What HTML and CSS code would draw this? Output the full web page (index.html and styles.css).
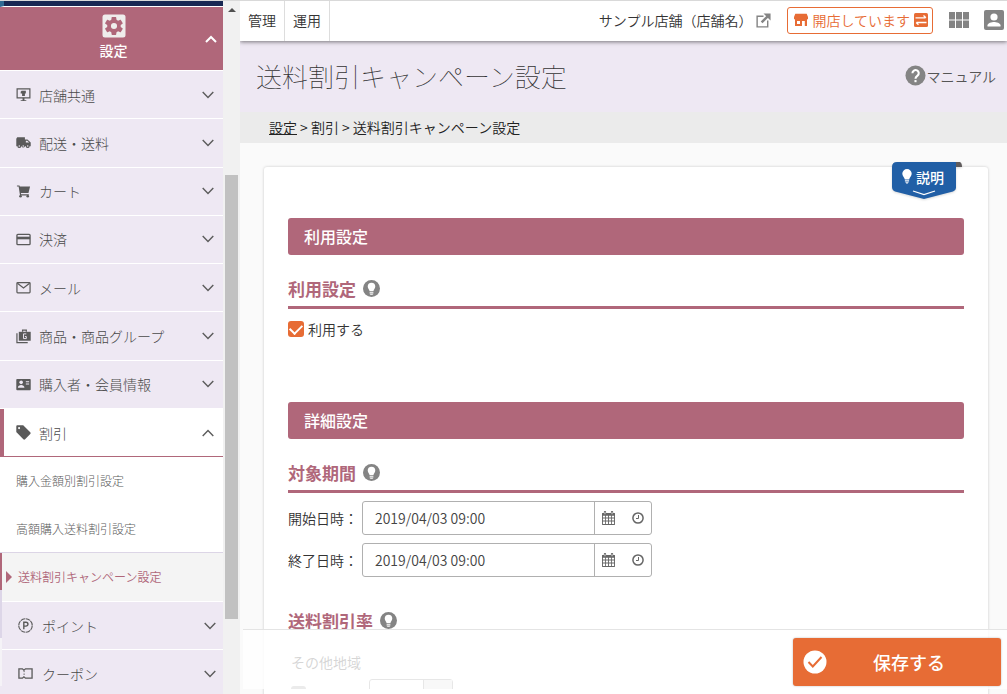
FILE: index.html
```html
<!DOCTYPE html>
<html lang="ja">
<head>
<meta charset="utf-8">
<meta name="viewport" content="width=device-width, initial-scale=1">
<title>送料割引キャンペーン設定</title>
<link rel="stylesheet" href="styles.css">
</head>
<body>
<svg class="sprite" aria-hidden="true">
  <symbol id="down" viewBox="0 0 12 8"><path d="M.7 1 6 6.600 11.300 1" fill="none" stroke="currentColor" stroke-width="1.400"/></symbol>
  <symbol id="up" viewBox="0 0 12 8"><path d="M.7 7 6 1.400 11.300 7" fill="none" stroke="currentColor" stroke-width="1.400"/></symbol>
  <symbol id="bold-up" viewBox="0 0 12 8"><path d="M1 7 6 2 11 7" fill="none" stroke="currentColor" stroke-width="2"/></symbol>
  <symbol id="bulb" viewBox="0 0 18 18"><circle cx="9" cy="9" r="9" fill="#848484"/><path fill="#fff" d="M9 2.800a4 4 0 0 0-4 4c0 2.200 1.700 3 2 5.200h4c.3-2.200 2-3 2-5.200a4 4 0 0 0-4-4zM7 12.700h4v.8H7zM7 14.200h4v.6L10 15.500H8L7 14.800z"/></symbol>
  <symbol id="calendar" viewBox="0 0 14 15"><path fill="currentColor" fill-rule="evenodd" d="M.5 2H2V.8C2 .3 2.400 0 2.900 0h.6c.5 0 .9.300.9.800V2h5.200V.8c0-.5.400-.8.900-.8h.6c.5 0 .9.300.9.800V2h1.500l.5.500v12l-.5.500H.5L0 14.500v-12zM1 5v2h2.300V5zm3.200 0v2h2.300V5zm3.300 0v2h2.300V5zm3.200 0v2H13V5zM1 8v2.300h2.300V8zm3.200 0v2.300h2.300V8zm3.300 0v2.300h2.300V8zm3.200 0v2.300H13V8zM1 11.300V14h2.300v-2.700zm3.200 0V14h2.300v-2.700zm3.300 0V14h2.300v-2.700zm3.200 0V14H13v-2.700zM2.800 1v2.400h.8V1zm7.600 0v2.400h.8V1z"/></symbol>
  <symbol id="clock" viewBox="0 0 12 12"><g fill="none" stroke="currentColor"><circle cx="6" cy="6" r="5.100" stroke-width="1.500"/><path d="M6.500 3v3.500H4"/></g></symbol>
</svg>

<aside class="sidebar">
  <div class="strip"></div>
  <button class="side-head" type="button">
    <svg class="gear" viewBox="0 0 24 24"><rect x=".5" y=".5" width="23" height="23" rx="2.500" fill="#efedec"/><path transform="translate(1.200 1.200) scale(.9)" fill="#b0677a" d="M19.400 13a7.500 7.500 0 0 0 0-2l2.100-1.600c.2-.2.250-.4.100-.7l-2-3.400c-.1-.2-.4-.3-.6-.2l-2.500 1a7.300 7.300 0 0 0-1.700-1l-.4-2.600c0-.3-.2-.5-.5-.5h-4c-.3 0-.5.200-.5.500L9 5.100a7.300 7.300 0 0 0-1.700 1l-2.500-1c-.2-.1-.5 0-.6.2l-2 3.400c-.1.300-.1.500.1.700L4.500 11a7.500 7.500 0 0 0 0 2l-2.200 1.600c-.2.200-.2.400-.1.700l2 3.400c.1.200.4.300.6.200l2.500-1c.5.400 1.100.8 1.700 1l.4 2.600c0 .3.200.5.500.5h4c.3 0 .5-.2.500-.5l.4-2.600a7.300 7.300 0 0 0 1.700-1l2.500 1c.2.100.5 0 .6-.2l2-3.400c.1-.3.100-.5-.1-.7zM12 15.400a3.400 3.400 0 1 1 0-6.800 3.400 3.400 0 0 1 0 6.800z"/></svg>
    <span>設定</span>
    <svg class="chev head-chev"><use href="#bold-up"/></svg>
  </button>
  <nav>
    <div class="menu">
      <button class="item" type="button"><svg class="ico" viewBox="0 0 16 16"><path fill="none" stroke="currentColor" stroke-width="1.300" d="M1.200 2h13.600v9.500H1.200z"/><path fill="currentColor" d="M7 11.500h2V14h2v1H5v-1h2zM5 5l1-1h4.500v3H9.500v2.500h-3V7H5z"/></svg><span>店舗共通</span><svg class="chev"><use href="#down"/></svg></button>
      <button class="item" type="button"><svg class="ico" viewBox="0 0 16 16"><path fill="currentColor" fill-rule="evenodd" d="M1.300 2.500h8.200v2.200h2.700L15.700 8v3.900h-1.200a2 2 0 0 1-4 0H9.600a2 2 0 0 1-3.800 0H5.500a2 2 0 0 1-4 0H.3v-8zM10.500 6v2h3.600L12 6zM3.500 11a.8.8 0 1 0 0 1.600.8.8 0 0 0 0-1.600zm4.200 0a.8.8 0 1 0 0 1.600.8.8 0 0 0 0-1.600zm4.800 0a.8.8 0 1 0 0 1.600.8.8 0 0 0 0-1.600z"/></svg><span>配送・送料</span><svg class="chev"><use href="#down"/></svg></button>
      <button class="item" type="button"><svg class="ico" viewBox="0 0 16 16"><path fill="currentColor" d="M1 1.500h2.700l.4 1.200H15l-1.700 7H5.200l.3 1.300h8.200v1.200H4.300L2.800 2.700H1z"/><circle cx="4.800" cy="13" r="1.400" fill="currentColor"/><circle cx="12.500" cy="13" r="1.400" fill="currentColor"/></svg><span>カート</span><svg class="chev"><use href="#down"/></svg></button>
      <button class="item" type="button"><svg class="ico" viewBox="0 0 16 16"><rect x="1" y="2.500" width="14" height="11" rx="1" fill="none" stroke="currentColor" stroke-width="1.400"/><path fill="currentColor" d="M1 5h14v2.800H1z"/></svg><span>決済</span><svg class="chev"><use href="#down"/></svg></button>
      <button class="item" type="button"><svg class="ico" viewBox="0 0 16 16"><g fill="none" stroke="currentColor" stroke-width="1.300"><rect x="1" y="2.700" width="14" height="11" rx=".8"/><path d="m1.500 3.500 6.500 5 6.500-5"/></g></svg><span>メール</span><svg class="chev"><use href="#down"/></svg></button>
      <button class="item" type="button"><svg class="ico" viewBox="0 0 16 16"><path fill="none" stroke="currentColor" stroke-width="1.300" d="M1 4.500v10h11.500M7 3V1.200h4V3"/><path fill="currentColor" d="M3 3h12.700v9.500H3z"/><path fill="none" stroke="#eee8f3" d="M11 5.200H8v5h3V8H9.500"/></svg><span>商品・商品グループ</span><svg class="chev"><use href="#down"/></svg></button>
      <button class="item" type="button"><svg class="ico" viewBox="0 0 16 16"><rect x=".3" y="2" width="15.400" height="12" rx="1" fill="currentColor"/><g fill="#eee8f3"><circle cx="5.500" cy="5.700" r="1.900"/><path d="M2 11.500c0-2 1.800-3 3.500-3s3.500 1 3.500 3zM10.500 4.500H14v1h-3.500zM10.500 7H14v1h-3.500z"/></g></svg><span>購入者・会員情報</span><svg class="chev"><use href="#down"/></svg></button>
    </div>
    <button class="item open" type="button"><svg class="ico" viewBox="0 0 16 16"><path fill="currentColor" fill-rule="evenodd" d="M1.500.300h5.700c.4 0 .7.200 1 .4l7 7c.6.600.6 1.300 0 1.900l-5.500 5.600c-.6.600-1.300.6-1.900 0L.8 8.100c-.3-.3-.5-.6-.5-1V1.600C.3.900.8.300 1.500.300zM3.300 2.200a1.100 1.100 0 1 0 0 2.200 1.100 1.100 0 0 0 0-2.200z"/></svg><span>割引</span><svg class="chev"><use href="#up"/></svg></button>
    <a class="sub" href="#">購入金額別割引設定</a>
    <a class="sub" href="#">高額購入送料割引設定</a>
    <div class="lower">
      <div class="rail"><i class="rail-pink"></i><i class="rail-lilac"></i><i class="rail-pale"></i></div>
      <div class="lower-list">
        <a class="sub current" href="#" aria-current="page">送料割引キャンペーン設定</a>
        <button class="item" type="button"><svg class="ico" viewBox="0 0 16 16"><circle cx="8" cy="8" r="7.200" fill="none" stroke="currentColor" stroke-width="1.200" stroke-dasharray="5 .65"/><path fill="none" stroke="currentColor" stroke-width="1.500" d="M6.200 12V4.500h2.300a2 2 0 0 1 0 4.200H6.200"/></svg><span>ポイント</span><svg class="chev"><use href="#down"/></svg></button>
        <button class="item" type="button"><svg class="ico" viewBox="0 0 16 16"><path fill="none" stroke="currentColor" stroke-width="1.400" d="M1 3h3.700l1.600 1.500L8 3h7v10H8l-1.700-1.500L4.700 13H1z"/><path fill="none" stroke="currentColor" stroke-dasharray="1.500 1.500" d="M6.500 5v6"/></svg><span>クーポン</span><svg class="chev"><use href="#down"/></svg></button>
      </div>
    </div>
  </nav>
</aside>
<div class="scrollbar" aria-hidden="true"><i class="arrow"></i><i class="thumb"></i></div>

<main class="main">
  <header class="topbar">
    <nav class="tabs"><a href="#">管理</a><a href="#">運用</a></nav>
    <a class="shop" href="#">サンプル店舗（店舗名）<svg viewBox="0 0 16 16"><g fill="none" stroke="#848484" stroke-width="1.500"><path d="M8 3.500H1.200v11.300h11.300V8"/><path d="m6 10 7-7" stroke-width="2.600"/></g><path d="M8 .500h7.500V8z" fill="#848484"/></svg></a>
    <button class="status" type="button"><svg viewBox="0 0 14 14"><path fill="currentColor" fill-rule="evenodd" d="M1.300.800h11.400L14 4v2.300h-1V13h-2.200V8H8v5H1V6.300H0V4zM3 8v3h3V8z"/></svg>開店しています<svg viewBox="0 0 14 14"><rect width="14" height="14" rx="1.500" fill="currentColor"/><path d="M1.500 4.800h10M9.500 2.500l2.400 2.300M12.500 9.500h-10M4.500 11.800 2.100 9.500" fill="none" stroke="#fff" stroke-width="1.300"/></svg></button>
    <button class="icon-btn" type="button" aria-label="アプリ一覧"><svg class="apps" viewBox="0 0 20 16"><path fill="#848484" d="M0 0h6v7.500H0zM7 0h6v7.500H7zM14 0h6v7.500h-6zM0 8.500h6V16H0zM7 8.500h6V16H7zM14 8.500h6V16h-6z"/></svg></button>
    <button class="icon-btn" type="button" aria-label="アカウント"><svg class="user" viewBox="0 0 20 20"><rect width="20" height="20" rx="2" fill="#848484"/><circle cx="10" cy="7" r="3.600" fill="#fff"/><path fill="#fff" d="M3.500 16.500v-1.200c0-2.300 4.300-3.400 6.500-3.400s6.500 1.100 6.500 3.400v1.200z"/></svg></button>
  </header>
  <div class="title-row">
    <h1>送料割引キャンペーン設定</h1>
    <a class="manual" href="#"><svg viewBox="0 0 22 22"><circle cx="11" cy="11" r="10.500" fill="#848484"/><path d="M7.800 8.600a3.300 3.300 0 1 1 5.300 2.600c-1.300 1-2.100 1.500-2.100 3.200" fill="none" stroke="#fff" stroke-width="2.200"/><path d="M9.900 15.800h2.200V18H9.900z" fill="#fff"/></svg>マニュアル</a>
  </div>
  <div class="crumbs"><a href="#">設定</a> &gt; 割引 &gt; 送料割引キャンペーン設定</div>
  <form class="card">
    <button class="ribbon" type="button"><svg class="ribbon-bg" viewBox="0 0 70 37" aria-hidden="true"><path fill="#5f5b5c" d="M60 0h8q2 1 2 5H60z"/><path fill="#215fa6" d="M5 0h59v26q0 2-3 3.500L32 37 3 29.500Q0 28 0 25V5q0-5 5-5z"/><path d="m21 29 11 3.500L43 29" fill="none" stroke="#fff" stroke-width="1.300"/></svg><span class="ribbon-label"><svg viewBox="0 0 10 15"><path fill="#fff" d="M5 0a4.700 4.700 0 0 0-4.700 4.700C.3 7.200 2.500 8 2.800 10.500h4.400C7.500 8 9.700 7.200 9.700 4.700A4.700 4.700 0 0 0 5 0zM2.900 11.200h4.200v1.300H2.900zM3.300 13.200h3.400L5.800 14.500H4.200z"/></svg>説明</span></button>
    <section class="block">
      <h2>利用設定</h2>
      <h3>利用設定<svg><use href="#bulb"/></svg></h3>
      <label class="check"><input type="checkbox" checked>利用する</label>
    </section>
    <section class="block">
      <h2>詳細設定</h2>
      <h3>対象期間<svg><use href="#bulb"/></svg></h3>
      <div class="field"><label for="start">開始日時：</label><div class="date"><input id="start" type="text" value="2019/04/03 09:00"><div class="date-tools"><button type="button" aria-label="日付"><svg class="cal"><use href="#calendar"/></svg></button><button type="button" aria-label="時刻"><svg class="clk"><use href="#clock"/></svg></button></div></div></div>
      <div class="field"><label for="end">終了日時：</label><div class="date"><input id="end" type="text" value="2019/04/03 09:00"><div class="date-tools"><button type="button" aria-label="日付"><svg class="cal"><use href="#calendar"/></svg></button><button type="button" aria-label="時刻"><svg class="clk"><use href="#clock"/></svg></button></div></div></div>
      <h3 class="rate"><span>送料割引率</span><svg><use href="#bulb"/></svg></h3>
      <div class="region">
        <label for="other">その他地域</label>
        <div class="region-row"><i class="stub"></i><div class="rate-input"><input id="other" type="text"><i></i></div></div>
      </div>
    </section>
  </form>
  <footer class="savebar">
    <button class="save" type="button"><svg viewBox="0 0 24 24"><circle cx="12" cy="12" r="11.500" fill="#fff"/><path d="m5.500 12 4.300 4.500 8.700-9.500" fill="none" stroke="#e76c35" stroke-width="2"/></svg><span>保存する</span></button>
  </footer>
</main>
</body>
</html>
```
FILE: styles.css
```css
* { box-sizing: border-box; }
body {
  margin: 0;
  height: 100vh;
  display: flex;
  overflow: hidden;
  border-top: 1px solid #d9d9d9;
  background: #fafafa;
  color: #333;
  font: 350 14px/20px "Noto Sans CJK JP", sans-serif;
}
button, input { font: inherit; color: inherit; }
button { border: 0; padding: 0; background: none; cursor: pointer; }
a { color: inherit; text-decoration: none; }
svg { display: block; flex: none; }
.sprite { position: absolute; width: 0; height: 0; }

/* Side menu */
.sidebar { flex: 0 0 223px; overflow: hidden; background: #eee8f3; color: #4a4a4a; font-weight: 300; }
.strip {
  height: 6px;
  background: #182853;
  border-left: 4px solid #2e6a93;
  border-bottom: 1px solid #fff;
}
.side-head {
  position: relative;
  width: 100%;
  height: 64px;
  display: flex;
  flex-direction: column;
  align-items: center;
  gap: 2px;
  padding: 7px 0 0 4px;
  background: #b0677a;
  border-bottom: 1px solid #fff;
  color: #fff;
  font-weight: 500;
}
.gear { width: 24px; height: 24px; }
.chev { width: 12px; height: 8px; margin-left: auto; color: #5c5c5c; }
.side-head .head-chev { position: absolute; right: 6px; top: 28px; color: #fff; }
.menu { display: grid; grid-auto-rows: 1fr; min-height: 338px; }
.item {
  width: 100%;
  min-height: 48px;
  display: flex;
  align-items: center;
  gap: 8px;
  padding: 0 9px 0 16px;
  border-bottom: 1px solid #fff;
  background: #eee8f3;
  text-align: left;
}
.ico { width: 15px; height: 15px; color: #5a5a5a; }
.item.open {
  background: #fff;
  border-bottom-color: #b0677a;
  border-left: 4px solid #b0677a;
  padding-left: 12px;
}
.sub {
  display: flex;
  align-items: center;
  height: 48px;
  padding-left: 16px;
  background: #fff;
  color: #5a5a5a;
  font-size: 12px;
}
.lower { display: flex; margin-top: -1px; border-top: 1px solid #dcd5e6; }
.rail { flex: 0 0 2px; display: flex; flex-direction: column; }
.rail-pink { height: 37px; background: #b0677a; }
.rail-lilac { height: 48px; background: #ddd6e8; }
.rail-pale { height: 48px; background: #f5f3f7; }
.lower-list { flex: 1; }
.lower-list .item { min-height: 48px; padding-right: 7px; gap: 9px; }
.sub.current {
  height: 49px;
  gap: 6px;
  padding-left: 4px;
  background: #f4f4f4;
  border-bottom: 1px solid #fff;
  color: #b0677a;
  font-weight: 350;
}
.sub.current::before {
  content: "";
  border: 6px solid transparent;
  border-left-color: #b0677a;
  border-right-width: 0;
}
.scrollbar { flex: 0 0 17px; background: #f1f1f1; display: flex; flex-direction: column; align-items: center; }
.arrow { margin-top: 7px; border: 4px solid transparent; border-bottom-color: #505050; border-top-width: 0; }
.thumb { width: 13px; height: 64%; margin-top: 163px; background: #c1c1c1; }

/* Page header */
.main { position: relative; flex: 1; min-width: 0; overflow: hidden; }
.topbar {
  position: relative;
  height: 40px;
  display: flex;
  align-items: center;
  padding-bottom: 2px;
  background: #fff;
  box-shadow: 0 1px 4px rgba(0, 0, 0, .5);
}
.tabs { display: flex; align-self: stretch; margin: 0 auto -2px 0; }
.tabs a { display: flex; align-items: center; padding: 0 8px 2px; border-right: 1px solid #ddd; }
.shop { display: flex; align-items: center; gap: 4px; }
.shop svg { width: 15px; height: 15px; }
.status {
  display: flex;
  align-items: center;
  gap: 4px;
  height: 27px;
  margin: 0 16px;
  padding: 0 4px 0 6px;
  border: 1px solid #e76c35;
  border-radius: 3px;
  color: #e76c35;
}
.status svg { width: 14px; height: 14px; }
.icon-btn { margin-right: 15px; }
.icon-btn:last-child { margin-right: 3px; }
.apps { width: 20px; height: 16px; }
.user { width: 20px; height: 20px; }
.title-row {
  display: flex;
  align-items: center;
  justify-content: space-between;
  height: 71px;
  padding: 0 11px 2px 16px;
  background: #eee8f3;
}
h1 { margin: 0; font-size: 26px; line-height: 36px; font-weight: 100; }
.manual { display: flex; align-items: center; color: #555; }
.manual svg { width: 21px; height: 21px; }
.crumbs { padding: 5px 29px 6px; background: #ebebeb; color: #222; }
.crumbs a { text-decoration: underline; }

/* Settings card */
.card {
  position: relative;
  margin: 24px 19px 0 24px;
  padding: 51px 24px 24px;
  min-height: 600px;
  background: #fff;
  border-radius: 3px;
  box-shadow: 0 0 3px rgba(0, 0, 0, .2);
}
.ribbon {
  position: absolute;
  top: -5px;
  right: 26px;
  width: 70px;
  height: 37px;
  color: #fff;
  font-weight: 500;
}
.ribbon-bg { position: absolute; inset: 0; width: 70px; height: 37px; filter: drop-shadow(0 1px 1px rgba(0, 0, 0, .15)); }
.ribbon-label { position: relative; display: flex; align-items: center; gap: 4px; padding: 0 0 8px 10px; }
.ribbon-label svg { width: 10px; height: 15px; }
.block { margin-bottom: 63px; }
h2 {
  margin: 0 0 21px;
  padding: 6px 16px 7px;
  border-radius: 3px;
  background: #b0677a;
  color: #fff;
  font-size: 16px;
  line-height: 24px;
  font-weight: 500;
}
h3 {
  display: flex;
  align-items: center;
  gap: 7px;
  margin: 0 0 8px;
  padding-bottom: 5px;
  border-bottom: 3px solid #b0677a;
  color: #b0677a;
  font-size: 17px;
  line-height: 25px;
  font-weight: 700;
}
h3 svg { width: 17px; height: 17px; }
.check { display: flex; align-items: center; gap: 4px; padding-top: 2px; }
.check input {
  appearance: none;
  width: 16px;
  height: 16px;
  margin: 0;
  border-radius: 3px;
  background: #e76c35;
  display: grid;
  place-items: center;
}
.check input:checked::after {
  content: "";
  width: 10px;
  height: 6px;
  border: solid #fff;
  border-width: 0 0 2px 2px;
  transform: translateY(-1px) rotate(-45deg);
}
.field { display: flex; align-items: center; gap: 4px; margin-bottom: 8px; }
.date {
  display: flex;
  width: 290px;
  height: 34px;
  border: 1px solid #b0b0b0;
  border-radius: 3px;
}
.date input { flex: 1; min-width: 0; padding: 0 12px; border: 0; background: none; color: #444; }
.date-tools { display: flex; align-items: center; gap: 17px; padding: 0 7px; border-left: 1px solid #b0b0b0; color: #666; }
.cal { width: 13px; height: 14px; }
.clk { width: 12px; height: 12px; }
.rate { margin: 31px 0 19px; padding-bottom: 0; border-bottom: 0; }
.rate span { text-decoration: underline 1px #888; text-underline-offset: 1px; }
.region { color: #333; padding-left: 3px; font-weight: 400; }
.region-row { display: flex; gap: 63px; height: 10px; margin-top: 7px; overflow: hidden; }
.stub { width: 15px; height: 15px; margin-top: 7px; border-radius: 3px; background: #999; }
.rate-input { display: flex; height: 34px; width: 84px; border: 1px solid #888; border-radius: 3px; }
.rate-input input { width: 53px; border: 0; background: none; }
.rate-input i { flex: 1; border-left: 1px solid #888; background: #ddd; }

/* Save bar floating over the form */
.savebar {
  position: absolute;
  left: 3px;
  right: 0;
  bottom: 5px;
  display: flex;
  justify-content: flex-end;
  padding: 8px 6px 3px;
  border-top: 1px solid #e4e4e4;
  background: rgba(255, 255, 255, .8);
}
.save {
  display: flex;
  align-items: center;
  width: 208px;
  height: 48px;
  padding: 0 10px;
  border-radius: 3px;
  background: #e76c35;
  color: #fff;
  font-size: 18px;
  font-weight: 500;
  box-shadow: 0 0 2px rgba(0, 0, 0, .3);
}
.save svg { width: 24px; height: 24px; }
.save span { flex: 1; text-align: center; }
```
